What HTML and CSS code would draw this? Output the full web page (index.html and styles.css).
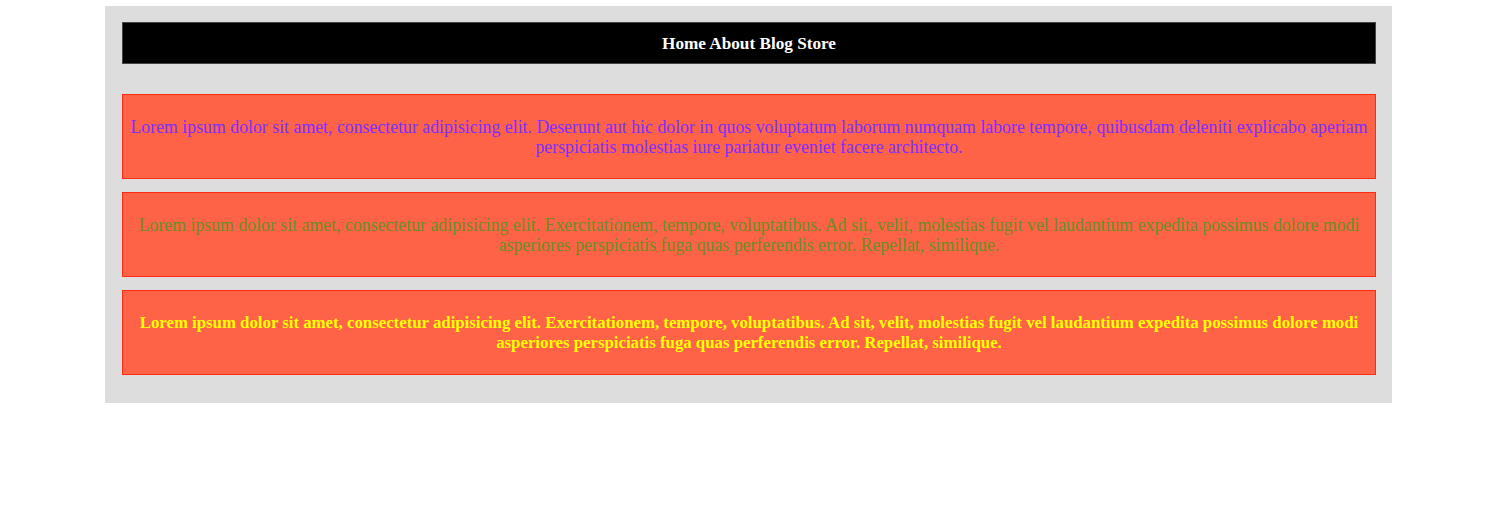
FILE: index.html
```html
<!DOCTYPE html>
<html>
<head>
<meta charset="utf-8">
<link rel="stylesheet" href="styles.css">
</head>
<body>
<div class="wrap">
  <nav class="nav">Home About Blog Store</nav>
  <div class="boxes">
    <div class="box purple">Lorem ipsum dolor sit amet, consectetur adipisicing elit. Deserunt aut hic dolor in quos voluptatum laborum numquam labore tempore, quibusdam deleniti explicabo aperiam perspiciatis molestias iure pariatur eveniet facere architecto.</div>
    <div class="box green">Lorem ipsum dolor sit amet, consectetur adipisicing elit. Exercitationem, tempore, voluptatibus. Ad sit, velit, molestias fugit vel laudantium expedita possimus dolore modi asperiores perspiciatis fuga quas perferendis error. Repellat, similique.</div>
    <div class="box yellow">Lorem ipsum dolor sit amet, consectetur adipisicing elit. Exercitationem, tempore, voluptatibus. Ad sit, velit, molestias fugit vel laudantium expedita possimus dolore modi asperiores perspiciatis fuga quas perferendis error. Repellat, similique.</div>
  </div>
</div>
</body>
</html>
```
FILE: styles.css
```css
html, body {
  margin: 0;
  padding: 0;
  background: #fff;
  font-family: "Liberation Serif", "Times New Roman", serif;
  font-size: 16px;
}
.wrap {
  width: 1287px;
  box-sizing: border-box;
  margin: 6px 0 0 105px;
  background: #dddddd;
  padding: 16px 16px 28px 17px;
}
.nav {
  height: 42px;
  box-sizing: border-box;
  background: #000;
  border: 1px solid #444;
  padding-top: 1px;
  color: #fff;
  font-weight: bold;
  font-size: 17.2px;
  display: flex;
  align-items: center;
  justify-content: center;
  line-height: 20px;
}
.boxes {
  margin-top: 30px;
  display: flex;
  flex-direction: column;
  gap: 13px;
}
.box {
  background: #ff6347;
  border: 1px solid #ff2a10;
  padding: 22px 4px 21px;
  text-align: center;
  line-height: 20px;
  font-size: 17.8px;
  min-height: 40px;
}
.purple { color: #7b2fff; }
.green { color: #6b8e23; }
.yellow { color: #ffff00; font-weight: bold; font-size: 16.8px; }
```
